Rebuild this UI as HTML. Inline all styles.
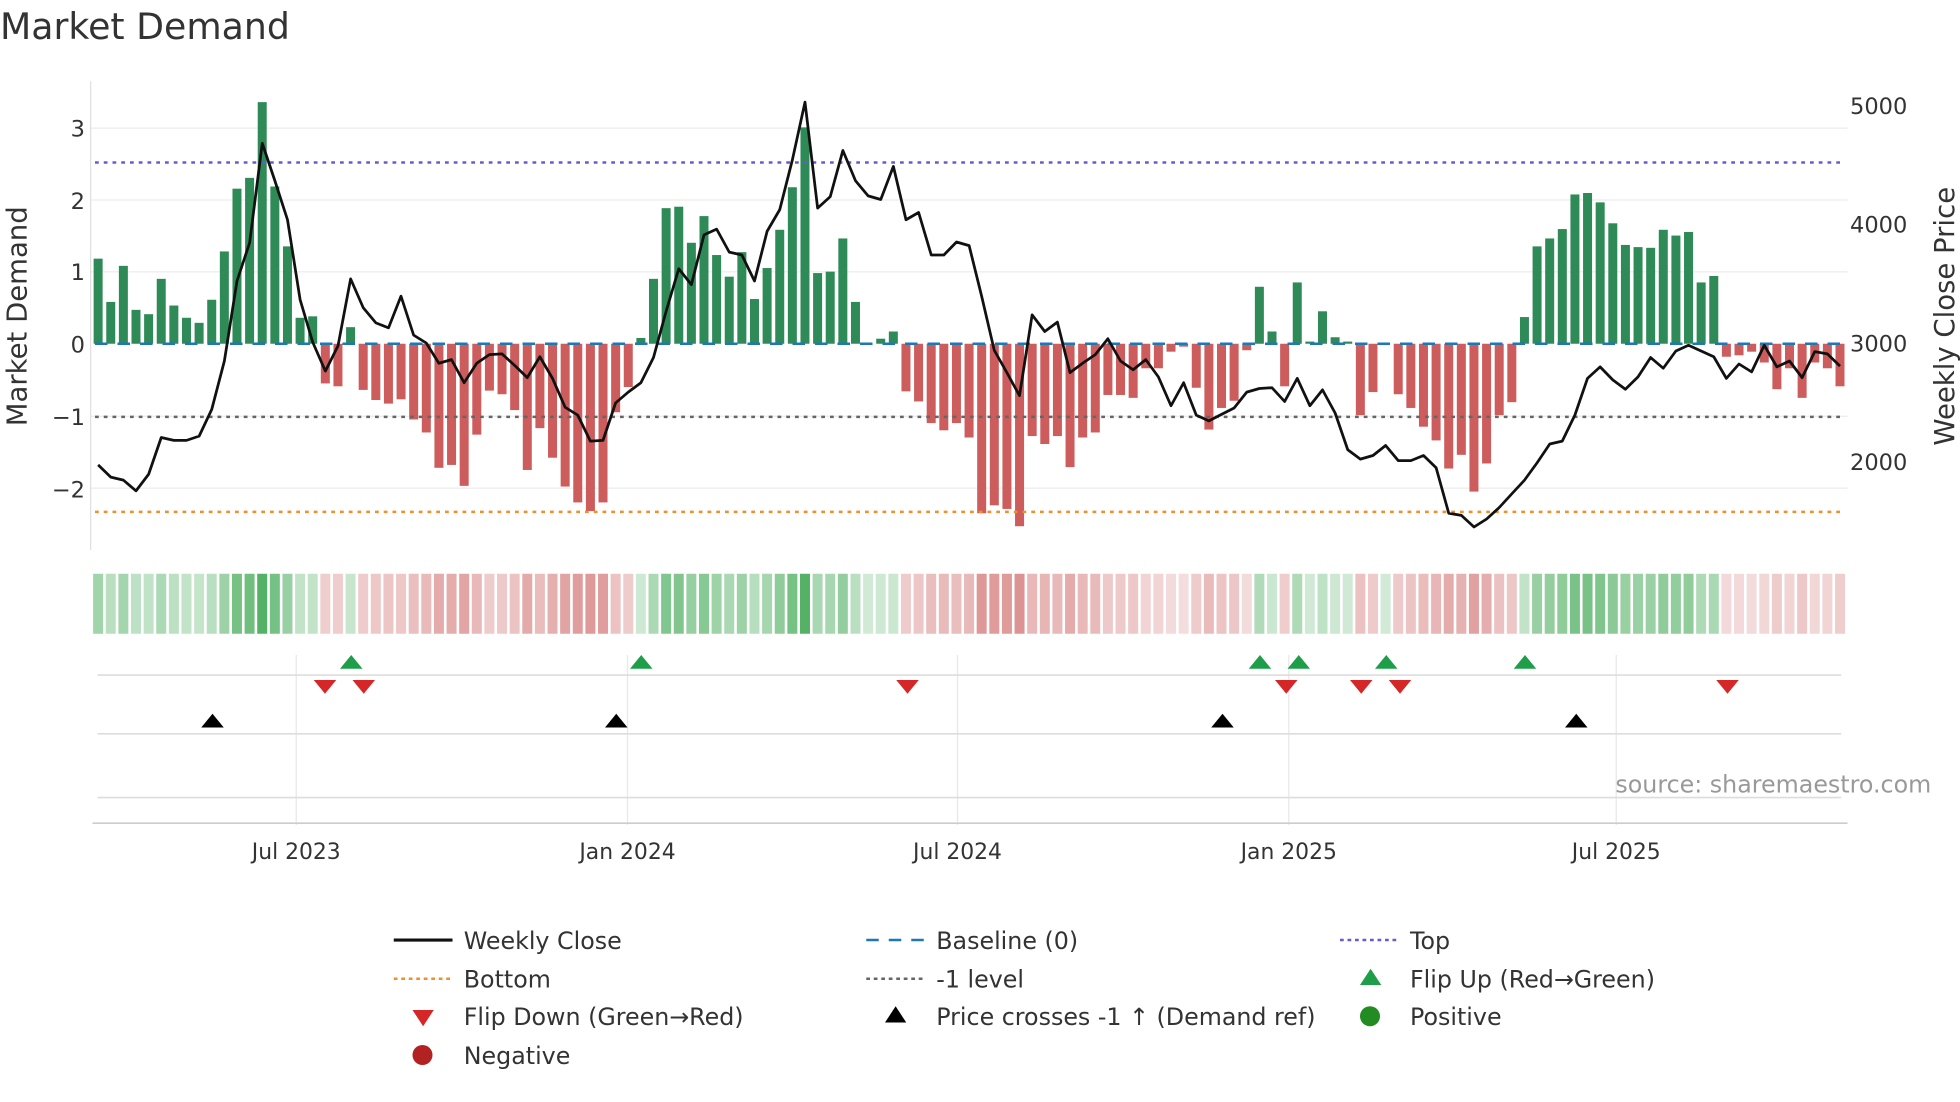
<!DOCTYPE html>
<html><head><meta charset="utf-8">
<style>
html,body{margin:0;padding:0;background:#fff;}
svg{display:block;font-family:"DejaVu Sans","Liberation Sans",sans-serif;}
</style></head>
<body>
<svg id="s" width="1960" height="1102" viewBox="0 0 1568 881.6" xmlns="http://www.w3.org/2000/svg">
<rect width="1568" height="881.6" fill="#fff"/>
<text x="0" y="31" font-size="29" fill="#333">Market Demand</text>
<g id="grid" stroke="#ececec" stroke-width="1">
<line x1="72" x2="1478" y1="102.5" y2="102.5"/>
<line x1="72" x2="1478" y1="160" y2="160"/>
<line x1="72" x2="1478" y1="217.5" y2="217.5"/>
<line x1="72" x2="1478" y1="333" y2="333"/>
<line x1="72" x2="1478" y1="390.5" y2="390.5"/>
</g>
<line x1="72.5" x2="72.5" y1="65" y2="440" stroke="#e0e0e0"/>
<g font-size="18" fill="#333" text-anchor="end">
<text x="68" y="109">3</text><text x="68" y="167">2</text><text x="68" y="224">1</text>
<text x="68" y="282">0</text><text x="68" y="340">−1</text><text x="68" y="398">−2</text>
</g>
<g font-size="18" fill="#333">
<text x="1480" y="91">5000</text><text x="1480" y="186">4000</text>
<text x="1480" y="281">3000</text><text x="1480" y="376">2000</text>
</g>
<text transform="translate(21,253) rotate(-90)" font-size="22" fill="#333" text-anchor="middle">Market Demand</text>
<text transform="translate(1563,253) rotate(-90)" font-size="22" fill="#333" text-anchor="middle">Weekly Close Price</text>
<g id="bars"></g>
<line x1="76" x2="1476" y1="130" y2="130" stroke="#6a5acd" stroke-width="2" stroke-dasharray="3,4"/>
<line x1="76" x2="1476" y1="333.5" y2="333.5" stroke="#666" stroke-width="2" stroke-dasharray="3,4"/>
<line x1="76" x2="1476" y1="409.5" y2="409.5" stroke="#f28e2b" stroke-width="2" stroke-dasharray="3,4"/>
<line x1="76" x2="1476" y1="275" y2="275" stroke="#1f77b4" stroke-width="2" stroke-dasharray="10,8"/>
<polyline id="price" fill="none" stroke="#111" stroke-width="2.2" stroke-linejoin="round"/>
<g id="heat"></g>
<g stroke="#e8e8e8" stroke-width="1">
<line x1="237" x2="237" y1="524" y2="660"/><line x1="502" x2="502" y1="524" y2="660"/>
<line x1="766" x2="766" y1="524" y2="660"/><line x1="1031" x2="1031" y1="524" y2="660"/>
<line x1="1293" x2="1293" y1="524" y2="660"/>
</g>
<g stroke="#ddd" stroke-width="1.3">
<line x1="78" x2="1473" y1="540" y2="540"/>
<line x1="78" x2="1473" y1="587" y2="587"/>
<line x1="78" x2="1473" y1="638" y2="638"/>
<line x1="74" x2="1478" y1="658.5" y2="658.5" stroke="#ccc"/>
</g>
<g id="marks"></g>
<text x="1545" y="634" font-size="19" fill="#999" text-anchor="end">source: sharemaestro.com</text>
<g font-size="17.5" fill="#333" text-anchor="middle">
<text x="237" y="687">Jul 2023</text><text x="502" y="687">Jan 2024</text>
<text x="766" y="687">Jul 2024</text><text x="1031" y="687">Jan 2025</text>
<text x="1293" y="687">Jul 2025</text>
</g>
<g font-size="19" fill="#333">
<line x1="315" x2="362" y1="752" y2="752" stroke="#111" stroke-width="2.5"/>
<text x="371" y="759">Weekly Close</text>
<line x1="693" x2="740" y1="752" y2="752" stroke="#1f77b4" stroke-width="2" stroke-dasharray="10,8"/>
<text x="749" y="759">Baseline (0)</text>
<line x1="1072" x2="1119" y1="752" y2="752" stroke="#6a5acd" stroke-width="2" stroke-dasharray="3,3"/>
<text x="1128" y="759">Top</text>
<line x1="315" x2="362" y1="783" y2="783" stroke="#f28e2b" stroke-width="2" stroke-dasharray="3,3"/>
<text x="371" y="790">Bottom</text>
<line x1="693" x2="740" y1="783" y2="783" stroke="#666" stroke-width="2" stroke-dasharray="3,3"/>
<text x="749" y="790">-1 level</text>
<path d="M1088,788 L1105,788 L1096.5,775 Z" fill="#1f9e4a"/>
<text x="1128" y="790">Flip Up (Red→Green)</text>
<path d="M330,808 L347,808 L338.5,821 Z" fill="#d62728"/>
<text x="371" y="820">Flip Down (Green→Red)</text>
<path d="M708,818 L725,818 L716.5,805 Z" fill="#000"/>
<text x="749" y="820">Price crosses -1 ↑ (Demand ref)</text>
<circle cx="1096" cy="813" r="8" fill="#228b22"/>
<text x="1128" y="820">Positive</text>
<circle cx="338" cy="844" r="8" fill="#b22222"/>
<text x="371" y="851">Negative</text>
</g>
</svg>
<script>
var v=[1.18,0.58,1.08,0.47,0.41,0.9,0.53,0.36,0.29,0.61,1.28,2.15,2.3,3.35,2.18,1.35,0.36,0.38,-0.55,-0.59,0.23,-0.64,-0.78,-0.83,-0.77,-1.05,-1.23,-1.72,-1.68,-1.97,-1.26,-0.65,-0.7,-0.92,-1.75,-1.17,-1.58,-1.98,-2.2,-2.32,-2.2,-0.95,-0.6,0.08,0.9,1.88,1.9,1.4,1.77,1.23,0.93,1.27,0.62,1.05,1.58,2.17,3.0,0.98,1.0,1.46,0.58,0,0.07,0.17,-0.66,-0.8,-1.1,-1.2,-1.1,-1.3,
-2.35,-2.24,-2.29,-2.53,-1.28,-1.39,-1.28,-1.71,-1.3,-1.23,-0.71,-0.71,-0.75,-0.34,-0.34,-0.11,-0.04,-0.61,-1.19,-0.89,-0.79,-0.09,0.79,0.17,-0.59,0.85,0.03,0.45,0.09,0.03,-0.99,-0.67,0,-0.7,-0.89,-1.15,-1.34,-1.73,-1.54,-2.05,-1.66,-0.99,-0.81,0.37,1.35,1.46,1.59,2.07,2.09,1.96,1.67,1.37,1.34,1.33,1.58,1.5,1.55,0.85,0.94,-0.18,-0.16,-0.11,-0.26,-0.63,-0.34,-0.75,-0.26,-0.34,-0.59];
var p=[-1.68,-1.85,-1.89,-2.04,-1.81,-1.30,-1.34,-1.34,-1.28,-0.91,-0.24,0.87,1.40,2.78,2.26,1.72,0.61,0.02,-0.38,-0.03,0.90,0.5,0.29,0.22,0.66,0.12,0.01,-0.27,-0.22,-0.54,-0.27,-0.15,-0.14,-0.30,-0.47,-0.18,-0.48,-0.88,-0.99,-1.35,-1.34,-0.82,-0.67,-0.54,-0.19,0.45,1.04,0.82,1.51,1.59,1.27,1.23,0.87,1.56,1.86,2.55,3.35,1.88,2.04,2.68,2.26,2.05,2.0,2.46,1.72,1.82,1.23,1.23,1.41,1.36,
0.66,-0.09,-0.40,-0.72,0.40,0.17,0.30,-0.40,-0.27,-0.15,0.07,-0.24,-0.36,-0.22,-0.46,-0.86,-0.54,-0.99,-1.07,-0.98,-0.89,-0.67,-0.62,-0.61,-0.80,-0.48,-0.86,-0.64,-0.96,-1.47,-1.60,-1.55,-1.41,-1.62,-1.62,-1.55,-1.72,-2.35,-2.38,-2.54,-2.43,-2.27,-2.08,-1.89,-1.65,-1.39,-1.35,-0.99,-0.48,-0.32,-0.5,-0.63,-0.46,-0.19,-0.34,-0.10,-0.02,-0.1,-0.18,-0.48,-0.28,-0.39,-0.02,-0.32,-0.24,-0.47,-0.11,-0.14,-0.31];
var N=v.length,x0=78.5,x1=1472,dx=(x1-x0)/(N-1),z=275,u=57.7;
var NS="http://www.w3.org/2000/svg";
function el(t,a,par){var e=document.createElementNS(NS,t);for(var k in a)e.setAttribute(k,a[k]);document.getElementById(par).appendChild(e);return e;}
var pts=[];
for(var i=0;i<N;i++){var x=x0+i*dx,val=v[i],h=Math.abs(val)*u;
 if(h>0.3) el("rect",{x:x-3.6,y:val>0?z-h:z,width:7.2,height:h,fill:val>=0?"#2e8b57":"#cd5c5c"},"bars");
 var a=0.22+0.6*Math.min(1,Math.abs(val)/3.0);
 el("rect",{x:x-4,y:459,width:8,height:48,fill:val>=0?"rgba(46,160,67,"+a+")":"rgba(200,80,80,"+(a*0.85)+")"},"heat");
 if(i<p.length) pts.push(x.toFixed(1)+","+(z-p[i]*u).toFixed(1));}
document.getElementById("price").setAttribute("points",pts.join(" "));
[281,513,1008,1039,1109,1220].forEach(function(x){el("path",{d:"M"+(x-9)+",535 L"+(x+9)+",535 L"+x+",524 Z",fill:"#1f9e4a"},"marks");});
[260,291,726,1029,1089,1120,1382].forEach(function(x){el("path",{d:"M"+(x-9)+",544 L"+(x+9)+",544 L"+x+",555 Z",fill:"#d62728"},"marks");});
[170,493,978,1261].forEach(function(x){el("path",{d:"M"+(x-9)+",582 L"+(x+9)+",582 L"+x+",571 Z",fill:"#000"},"marks");});
</script>
</body></html>
